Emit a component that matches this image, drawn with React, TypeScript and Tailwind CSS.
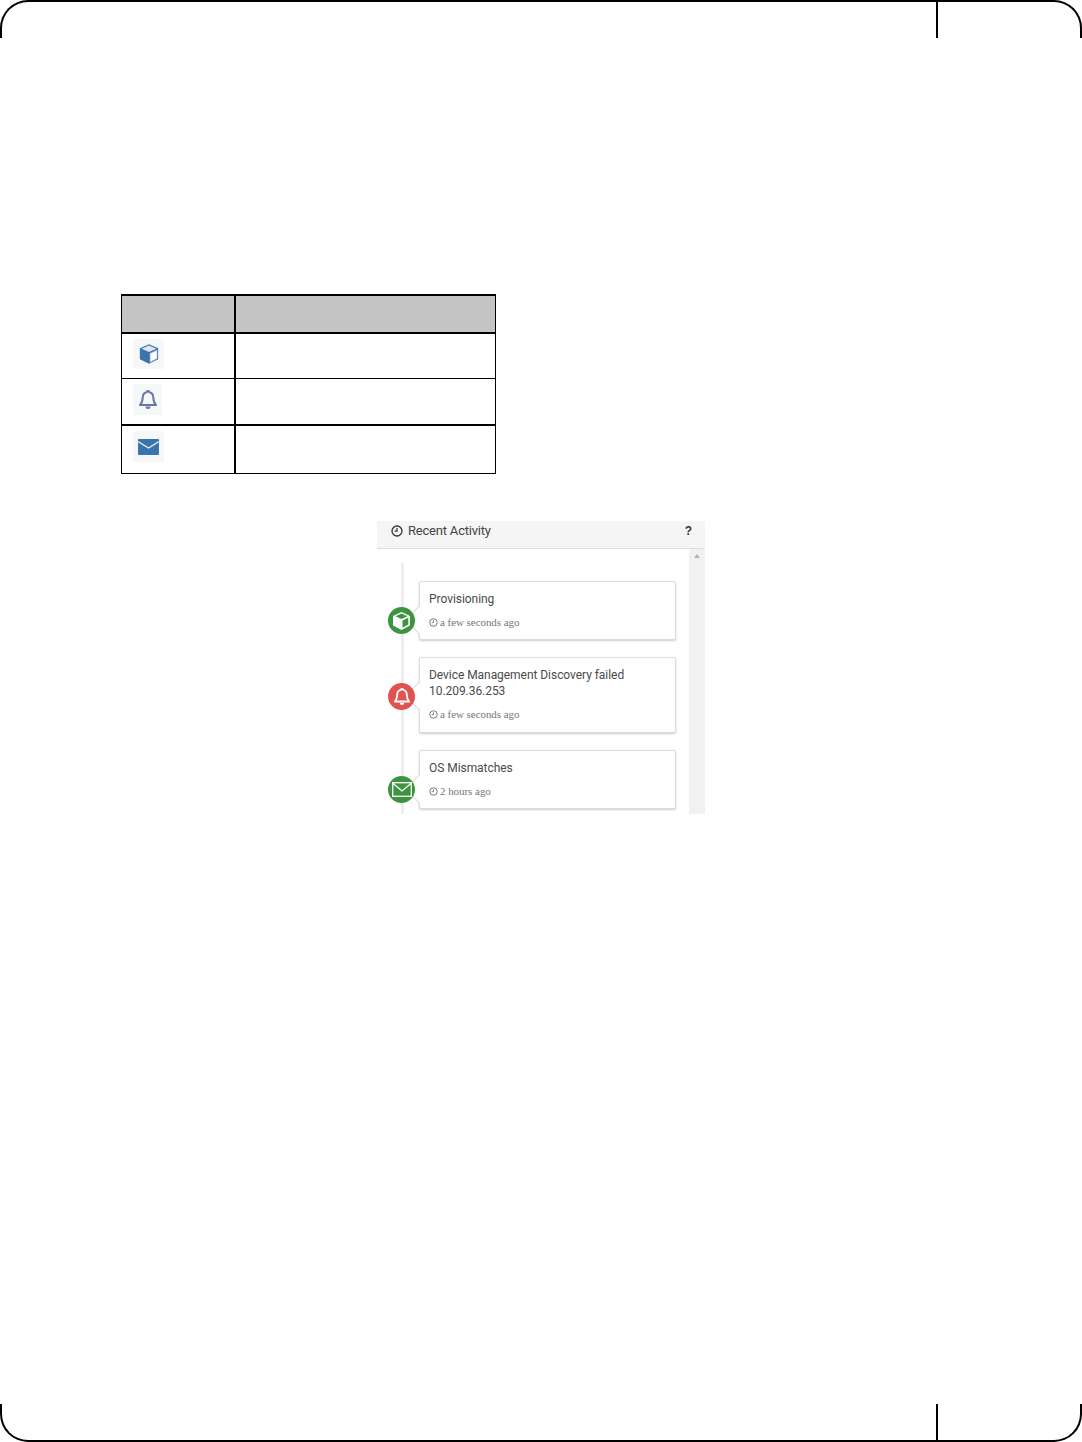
import type { JSX, ReactNode } from 'react';

function ClockIcon({ className }: { className: string }): JSX.Element {
  return (
    <svg className={className} viewBox="0 0 12 12" fill="none" stroke="currentColor" aria-hidden="true">
      <circle cx="6" cy="6" r="5" strokeWidth="1.3" />
      <path d="M6 3v3.2H3.6" strokeWidth="1.2" />
    </svg>
  );
}

function CubeIcon(): JSX.Element {
  return (
    <svg className="h-[21px] w-[21px]" viewBox="0 0 21 21" aria-hidden="true">
      <path d="M10.5 2 19 6v9.5L10.5 20 2 15.5V6z" fill="#fff" />
      <path d="M10.5 3.500 16.500 6.300 10.500 9 4.500 6.300z" fill="#3c9440" />
      <path d="M11.500 10.500 17.300 7.800v6.800l-5.800 3.100z" fill="#3c9440" />
    </svg>
  );
}

function BellIcon({ className, stroke, fill }: { className: string; stroke: string; fill: string }): JSX.Element {
  return (
    <svg className={className} viewBox="0 0 20 22" aria-hidden="true">
      <path
        d="M10 2c.8 0 1.300.5 1.300 1.200 2.700.6 4 2.800 4 5.300 0 3.500.8 5.500 2.700 7.500H2c1.900-2 2.700-4 2.700-7.500 0-2.500 1.300-4.700 4-5.300C8.700 2.500 9.200 2 10 2z"
        fill={fill}
        stroke={stroke}
        strokeWidth="2"
        strokeLinejoin="round"
      />
      <path d="M7.500 17.500a2.500 2.500 0 0 0 5 0z" fill={stroke} />
    </svg>
  );
}

function MailOutlineIcon(): JSX.Element {
  return (
    <svg className="h-[15px] w-[20px]" viewBox="0 0 20 15" fill="none" stroke="#fff" strokeWidth="1.300" aria-hidden="true">
      <rect x="0.700" y="0.700" width="18.600" height="13.600" />
      <path d="M1 1.500 10 9 19 1.500" />
    </svg>
  );
}

function TableIconBox({ width, height, children }: { width: string; height: string; children: ReactNode }): JSX.Element {
  return <div className={`flex items-center justify-center bg-[#f6f7f9] ${width} ${height}`}>{children}</div>;
}

function TableRow({ icon, height, bottom }: { icon: ReactNode; height: string; bottom: string }): JSX.Element {
  return (
    <div className={`flex border-black ${height} ${bottom}`}>
      <div className="w-[114px] border-r-2 border-black pl-[11px] pt-[5px]">{icon}</div>
      <div className="flex-1" />
    </div>
  );
}

function ActivityCard({
  title,
  time,
  badge,
  badgeColor,
  tall,
}: {
  title: ReactNode;
  time: string;
  badge: ReactNode;
  badgeColor: string;
  tall?: boolean;
}): JSX.Element {
  return (
    <div className={`relative w-[257px] rounded-[2px] border border-[#dcdcdc] bg-white pb-[10px] pl-[9px] pt-[9px] shadow-[0_1px_2px_rgba(0,0,0,0.2)] ${tall ? 'min-h-[76px]' : 'min-h-[59px]'}`}>
      <div className="absolute -left-[11px] top-[28px] h-[20px] w-[20px] rotate-45 border-b border-l border-[#dcdcdc] bg-white" />
      <div className={`absolute -left-[32px] top-[25px] flex h-[27px] w-[27px] items-center justify-center rounded-full ${badgeColor}`}>
        {badge}
      </div>
      <div className="relative font-['Roboto',sans-serif] text-[12px] leading-4 tracking-[-0.05px] text-[#4a4a4a]">{title}</div>
      <div className="relative mt-2 flex h-[14px] items-center gap-[2px] font-['Liberation_Serif',serif] text-[11px] tracking-[-0.05px] text-[#777]">
        <ClockIcon className="h-[9px] w-[9px]" />
        <span>{time}</span>
      </div>
    </div>
  );
}

export default function App(): JSX.Element {
  return (
    <main className="flex h-[1442px] w-[1082px] flex-col bg-white">
      {/* Page frame, top */}
      <header className="flex h-[38px] justify-end rounded-t-[28px] border-x-2 border-t-2 border-black">
        <div className="w-[144px] border-l-2 border-black" />
      </header>

      <section className="pl-[121px] pt-[256px]">
        {/* Icon table */}
        <div className="w-[375px] border-x border-black">
          <div className="flex h-[40px] border-y-2 border-black bg-[#c4c4c4]">
            <div className="w-[114px] border-r-2 border-black" />
          </div>
          <TableRow
            height="h-[45px]"
            bottom="border-b"
            icon={
              <TableIconBox width="w-[31px]" height="h-[30px]">
                <svg className="h-[24px] w-[24px]" viewBox="0 0 21 21" aria-hidden="true">
                  <path d="M10.500 2 18.500 5.500v9.500l-8 4-8-4V5.500z" fill="#3a74ad" strokeLinejoin="round" />
                  <path d="M10.500 3 17 5.800l-6.500 3-6.500-3z" fill="#dfe7f0" />
                  <path d="M11.500 10 17.500 7.200v7.200l-6 3.200z" fill="#fff" stroke="#b9c4d4" strokeWidth="0.600" />
                </svg>
              </TableIconBox>
            }
          />
          <TableRow
            height="h-[47px]"
            bottom="border-b-2"
            icon={
              <TableIconBox width="w-[29px]" height="h-[31px]">
                <BellIcon className="h-[22px] w-[20px]" stroke="#69789e" fill="#f6f7f9" />
              </TableIconBox>
            }
          />
          <TableRow
            height="h-[48px]"
            bottom="border-b"
            icon={
              <TableIconBox width="w-[31px]" height="h-[31px]">
                <svg className="h-[16px] w-[21px]" viewBox="0 0 21 16" aria-hidden="true">
                  <rect width="21" height="16" rx="1" fill="#3a74ad" />
                  <path d="M0 2.500 10.500 9 21 2.500" fill="none" stroke="#eef2f7" strokeWidth="1.300" />
                </svg>
              </TableIconBox>
            }
          />
        </div>

        {/* Recent Activity panel */}
        <div className="ml-[256px] mt-[47px] flex h-[293px] w-[328px] flex-col overflow-hidden bg-white">
          <div className="flex h-[28px] shrink-0 items-start justify-between border-b border-[#ddd] bg-[#f5f5f5] pl-[14px] pr-[13px] text-[#444]">
            <div className="flex h-[20px] items-center gap-[5px] font-['Roboto',sans-serif] text-[13px] tracking-[-0.2px]">
              <ClockIcon className="h-[12px] w-[12px] text-[#333]" />
              <span>Recent Activity</span>
            </div>
            <span className="pt-[2px] font-['Liberation_Sans',sans-serif] text-[12px] font-bold leading-[16px] text-[#333]">?</span>
          </div>
          <div className="flex min-h-0 flex-1">
            <div className="relative flex-1 pl-[42px] pt-[32px]">
              <div className="absolute bottom-0 left-[24px] top-[14px] w-[3px] bg-[#eeeeee]" />
              <div className="flex flex-col gap-[17px]">
                <ActivityCard title="Provisioning" time="a few seconds ago" badgeColor="bg-[#3c9440]" badge={<CubeIcon />} />
                <ActivityCard
                  tall
                  title={
                    <>
                      Device Management Discovery failed
                      <br />
                      10.209.36.253
                    </>
                  }
                  time="a few seconds ago"
                  badgeColor="bg-[#df5350]"
                  badge={<BellIcon className="h-[20px] w-[18px]" stroke="#fff" fill="#df5350" />}
                />
                <ActivityCard title="OS Mismatches" time="2 hours ago" badgeColor="bg-[#3c9440]" badge={<MailOutlineIcon />} />
              </div>
            </div>
            <div className="flex w-[16px] justify-center bg-[#f1f1f1] pt-[5px]">
              <div className="h-0 w-0 border-x-[3.500px] border-b-[4px] border-x-transparent border-b-[#b5b5b5]" />
            </div>
          </div>
        </div>
      </section>

      {/* Page frame, bottom */}
      <footer className="mt-auto flex h-[38px] justify-end rounded-b-[28px] border-x-2 border-b-2 border-black">
        <div className="w-[144px] border-l-2 border-black" />
      </footer>
    </main>
  );
}
